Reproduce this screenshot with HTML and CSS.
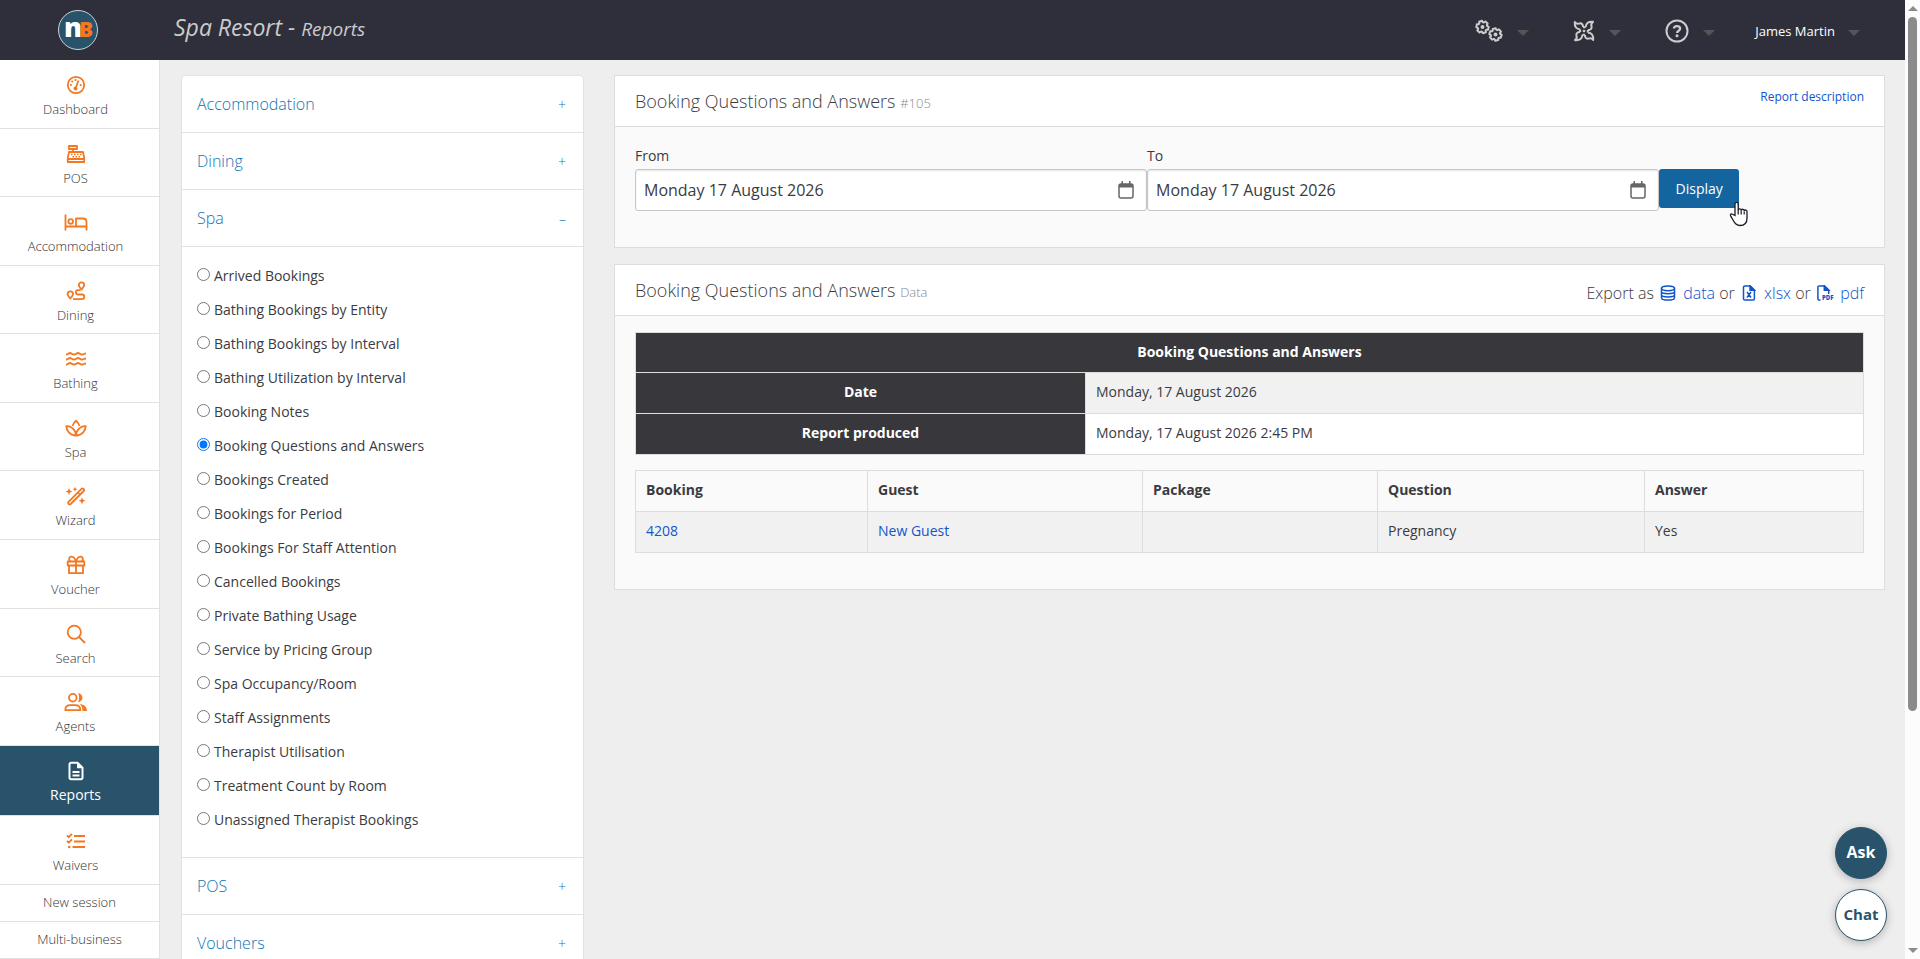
FILE: index.html
```html
<!DOCTYPE html>
<html lang="en">
<head>
    <meta charset="UTF-8">
    <meta name="viewport" content="width=device-width, initial-scale=1.0">
    <title>Spa Resort - Reports</title>
    <link rel="stylesheet" href="styles.css">
</head>
<body>
    <div class="app">
        <header class="topbar">
            <a href="#" class="logo" aria-label="Home">
                <svg width="42" height="42" viewBox="0 0 42 42">
                    <circle cx="21" cy="21" r="19.5" fill="#28536b" stroke="#c9d3da" stroke-width="1"/>
                    <text x="7" y="28" class="logo-n">n</text>
                    <text x="22" y="28" class="logo-b">B</text>
                </svg>
            </a>
            <h1 class="page-title">Spa Resort - <small>Reports</small></h1>
            <nav class="top-menu">
                <button type="button" class="top-item" aria-label="Settings">
                    <svg width="28" height="24" viewBox="0 0 28 24" fill="none" stroke="#ccc" stroke-width="2" stroke-linejoin="round">
                        <defs>
                            <path id="gear" d="M4.26-1.99 6.02-1.5V1.5L4.26 1.99 3.85 2.69 4.31 4.46 1.71 5.96.41 4.69H-.41L-1.71 5.96-4.31 4.46-3.85 2.69-4.26 1.99-6.02 1.5V-1.5L-4.26-1.99-3.85-2.69-4.31-4.46-1.71-5.96-.41-4.69H.41L1.71-5.96 4.31-4.46 3.85-2.69z"/>
                        </defs>
                        <use href="#gear" transform="translate(7.5 8) rotate(12)"/>
                        <circle cx="7.5" cy="8" r="1" />
                        <use href="#gear" transform="translate(20.5 15.5) rotate(18)"/>
                        <circle cx="20.5" cy="15.5" r="1" />
                    </svg>
                    <span class="caret"></span>
                </button>
                <button type="button" class="top-item" aria-label="Integrations">
                    <svg width="22" height="22" viewBox="-11 -11 22 22" fill="none" stroke="#ccc" stroke-width="2" stroke-linejoin="round">
                        <defs>
                            <path id="blade" d="M-3.8-1.6C-7.5-1.8-9.600-4-9.200-9-8-7.200-6-7-4.200-7.600-2-8-.8-6-1-3.800"/>
                        </defs>
                        <use href="#blade"/>
                        <use href="#blade" transform="rotate(90)"/>
                        <use href="#blade" transform="rotate(180)"/>
                        <use href="#blade" transform="rotate(270)"/>
                        <path d="M-1-3.8 1.6-3.8M3.8-1V1.6M1 3.8-1.6 3.8M-3.8 1V-1.6"/>
                        <circle cx="0" cy="0" r="1.3" fill="#ccc" stroke="none"/>
                    </svg>
                    <span class="caret"></span>
                </button>
                <button type="button" class="top-item" aria-label="Help">
                    <svg width="24" height="24" viewBox="0 0 24 24" fill="none" stroke="#ccc" stroke-width="2">
                        <circle cx="12" cy="12" r="10.5"/>
                        <path d="M9 9.6C9 8 10.2 7.2 12 7.2s3.1 1 3.1 2.5c0 2-3 2.1-3 4.2" stroke-width="2.3"/>
                        <circle cx="12" cy="16.7" r="1.5" fill="#ccc" stroke="none"/>
                    </svg>
                    <span class="caret"></span>
                </button>
                <button type="button" class="top-item user">
                    James Martin
                    <span class="caret"></span>
                </button>
            </nav>
        </header>

        <div class="body">
            <nav class="sidebar">
                <a href="#" class="nav-item">
                    <svg width="20" height="20" viewBox="0 0 20 20">
                        <circle cx="10" cy="10" r="8.2"/>
                        <circle cx="9.5" cy="13.5" r="2" class="solid"/>
                        <path d="M9.5 13.5 12.5 5.5"/>
                        <g class="solid">
                            <circle cx="5" cy="10" r="1.1"/>
                            <circle cx="6.3" cy="6.5" r="1.1"/>
                            <circle cx="9.5" cy="5" r="1.1"/>
                            <circle cx="14.7" cy="10" r="1.1"/>
                        </g>
                    </svg>
                    <span>Dashboard</span>
                </a>
                <a href="#" class="nav-item">
                    <svg width="20" height="20" viewBox="0 0 20 20">
                        <path d="M3 2h8v3H3zM7 5v3M3 8h14l1.2 6v4H1.8v-4zM2 15h16"/>
                        <path d="M5 10.5h1.5M8 10.5h1.5M11 10.5h1.5M14 10.5h1.5M6.5 12.8h1.5M9.5 12.8h1.5M12.5 12.8h1.5" stroke-width="1.5"/>
                    </svg>
                    <span>POS</span>
                </a>
                <a href="#" class="nav-item">
                    <svg width="24" height="20" viewBox="0 0 24 20">
                        <path d="M1.5 2.5v16M1.5 14.5h21M22.5 18.5V10c0-2-1.5-3.5-3.5-3.5h-7v8"/>
                        <circle cx="6.7" cy="9.5" r="2.3"/>
                    </svg>
                    <span>Accommodation</span>
                </a>
                <a href="#" class="nav-item">
                    <svg width="20" height="20" viewBox="0 0 20 20">
                        <path d="M15.5 8.5C13.8 6.5 12.8 5.2 12.8 4a2.7 2.7 0 0 1 5.4 0c0 1.2-1 2.5-2.7 4.5zM4.3 17.5C2.6 15.5 1.6 14.2 1.6 13a2.7 2.7 0 0 1 5.4 0c0 1.2-1 2.5-2.7 4.5z"/>
                        <path d="M14.5 9.2H12a2.1 2.1 0 0 0 0 4.3h4a2.3 2.3 0 0 1 0 4.6H7"/>
                    </svg>
                    <span>Dining</span>
                </a>
                <a href="#" class="nav-item">
                    <svg width="22" height="20" viewBox="0 0 22 20">
                        <path d="M1 5.5C3 5.5 3.5 4 5 4s2 1.5 4 1.5S11.5 4 13 4s2 1.5 4 1.5S19 4.5 21 4.5M1 10.5C3 10.5 3.5 9 5 9s2 1.5 4 1.5S11.5 9 13 9s2 1.5 4 1.5S19 9.5 21 9.5M1 15.5C3 15.5 3.5 14 5 14s2 1.5 4 1.5S11.5 14 13 14s2 1.5 4 1.5S19 14.5 21 14.5"/>
                    </svg>
                    <span>Bathing</span>
                </a>
                <a href="#" class="nav-item">
                    <svg width="22" height="20" viewBox="0 0 22 20">
                        <path d="M11 17.5C5 17.5 1.5 13 1.3 8.2 6 8 10.5 11 11 17.5zM11 17.5C17 17.5 20.5 13 20.7 8.2 16 8 11.5 11 11 17.5z"/>
                        <path d="M7.5 8C8.2 5.8 9.5 4 11 2.8 12.5 4 13.8 5.8 14.5 8"/>
                    </svg>
                    <span>Spa</span>
                </a>
                <a href="#" class="nav-item">
                    <svg width="22" height="20" viewBox="0 0 22 20">
                        <path d="M3.5 15.8 16.5 2.8a1.4 1.4 0 0 1 2 0l.2.2a1.4 1.4 0 0 1 0 2L5.7 18a1.4 1.4 0 0 1-2 0l-.2-.2a1.4 1.4 0 0 1 0-2zM13 6.5l2.2 2.2"/>
                        <path class="solid" d="M4 2l1 2.5L7.5 5.5 5 6.5 4 9.2 3 6.5.5 5.5 3 4.5zM10 .8l.7 1.7 1.8.7-1.8.7L10 5.6l-.7-1.7-1.8-.7 1.8-.7zM17 11.3l1 2.5 2.5 1-2.5 1-1 2.7-1-2.7-2.5-1 2.5-1z"/>
                    </svg>
                    <span>Wizard</span>
                </a>
                <a href="#" class="nav-item">
                    <svg width="20" height="20" viewBox="0 0 20 20">
                        <path d="M1.7 6.5h16.6v4H1.7zM3 10.5v7.7h14v-7.7M10 6.5v11.7M10 6.5C9 3.5 8 1.8 6.3 1.8a2.3 2.3 0 0 0-1.5 4.5M10 6.5c1-3 2-4.7 3.7-4.7a2.3 2.3 0 0 1 1.5 4.5"/>
                    </svg>
                    <span>Voucher</span>
                </a>
                <a href="#" class="nav-item">
                    <svg width="20" height="20" viewBox="0 0 20 20">
                        <circle cx="8.3" cy="8.3" r="6.6"/>
                        <path d="M13 13l6 6"/>
                    </svg>
                    <span>Search</span>
                </a>
                <a href="#" class="nav-item">
                    <svg width="24" height="20" viewBox="0 0 24 20">
                        <circle cx="8.8" cy="5.7" r="3.8"/>
                        <path d="M1.3 18.2c0-3 2-5 5-5h5c3 0 5 2 5 5z"/>
                        <path class="solid" d="M14 1.3a4.4 4.4 0 1 1 0 8.8c1.5-2.5 1.5-6.3 0-8.8zM16 12.2c4 0 7 2.5 7 6.8h-4.6c.2-2.8-.6-5-2.4-6.8z"/>
                    </svg>
                    <span>Agents</span>
                </a>
                <a href="#" class="nav-item active">
                    <svg width="20" height="20" viewBox="0 0 20 20">
                        <path d="M5 1.8h6.5L16.5 6.8V16.5a1.7 1.7 0 0 1-1.7 1.7H5.2a1.7 1.7 0 0 1-1.7-1.7V3.5A1.7 1.7 0 0 1 5.2 1.8zM6.5 11h7M6.5 14.5h7"/>
                        <path class="solid" d="M11 1.8v5.5h5.5z"/>
                    </svg>
                    <span>Reports</span>
                </a>
                <a href="#" class="nav-item">
                    <svg width="20" height="20" viewBox="0 0 20 20">
                        <path d="M8 5h11M8 10.5h11M6.5 16h12.5M1 4.5l1.7 1.7L6 2.8M1 10l1.7 1.7L6 8.3"/>
                        <circle cx="3.2" cy="16" r="1.3" class="solid"/>
                    </svg>
                    <span>Waivers</span>
                </a>
                <a href="#" class="nav-link">New session</a>
                <a href="#" class="nav-link">Multi-business</a>
            </nav>

            <main class="content">
                <section class="accordion">
                    <button type="button" class="accordion-head">Accommodation <span>+</span></button>
                    <button type="button" class="accordion-head">Dining <span>+</span></button>
                    <button type="button" class="accordion-head" aria-expanded="true">Spa <span>–</span></button>
                    <div class="report-list">
                        <label><input type="radio" name="report"> Arrived Bookings</label>
                        <label><input type="radio" name="report"> Bathing Bookings by Entity</label>
                        <label><input type="radio" name="report"> Bathing Bookings by Interval</label>
                        <label><input type="radio" name="report"> Bathing Utilization by Interval</label>
                        <label><input type="radio" name="report"> Booking Notes</label>
                        <label><input type="radio" name="report" checked> Booking Questions and Answers</label>
                        <label><input type="radio" name="report"> Bookings Created</label>
                        <label><input type="radio" name="report"> Bookings for Period</label>
                        <label><input type="radio" name="report"> Bookings For Staff Attention</label>
                        <label><input type="radio" name="report"> Cancelled Bookings</label>
                        <label><input type="radio" name="report"> Private Bathing Usage</label>
                        <label><input type="radio" name="report"> Service by Pricing Group</label>
                        <label><input type="radio" name="report"> Spa Occupancy/Room</label>
                        <label><input type="radio" name="report"> Staff Assignments</label>
                        <label><input type="radio" name="report"> Therapist Utilisation</label>
                        <label><input type="radio" name="report"> Treatment Count by Room</label>
                        <label><input type="radio" name="report"> Unassigned Therapist Bookings</label>
                    </div>
                    <button type="button" class="accordion-head">POS <span>+</span></button>
                    <button type="button" class="accordion-head">Vouchers <span>+</span></button>
                </section>

                <div class="panels">
                    <section class="panel">
                        <div class="panel-head">
                            <h2>Booking Questions and Answers <small>#105</small></h2>
                            <a href="#" class="description-link">Report description</a>
                        </div>
                        <form class="filters">
                            <div class="field">
                                <label for="from">From</label>
                                <input type="text" id="from" value="Monday 17 August 2026">
                                <svg class="calendar" width="16" height="18" viewBox="0 0 16 18">
                                    <rect x="1" y="3" width="14" height="14" rx="2" fill="none" stroke="#666" stroke-width="1.5"/>
                                    <path d="M1 3h14v3.5H1zM3.5 0h1.5v3H3.5zM11 0h1.5v3H11z" fill="#666"/>
                                </svg>
                            </div>
                            <div class="field">
                                <label for="to">To</label>
                                <input type="text" id="to" value="Monday 17 August 2026">
                                <svg class="calendar" width="16" height="18" viewBox="0 0 16 18">
                                    <rect x="1" y="3" width="14" height="14" rx="2" fill="none" stroke="#666" stroke-width="1.5"/>
                                    <path d="M1 3h14v3.5H1zM3.5 0h1.5v3H3.5zM11 0h1.5v3H11z" fill="#666"/>
                                </svg>
                            </div>
                            <div class="submit">
                                <button type="button" class="btn-display">Display</button>
                                <svg class="pointer" width="20" height="26" viewBox="0 0 20 26">
                                    <path d="M6 14.5V3a1.6 1.6 0 0 1 3.2 0v6.2a1.5 1.5 0 0 1 3 .3 1.5 1.5 0 0 1 3 .6 1.4 1.4 0 0 1 2.8.7V17c0 4.5-2.5 7.5-7 7.5-4 0-5.5-2.5-7-5.5l-2.5-4.3c-.5-1.5 1-2.2 2-1.4z" fill="#fff" stroke="#1b1b2b" stroke-width="1.3"/>
                                    <path d="M9.2 9v4.5M12.2 9.5v4M15.2 10.5v3" stroke="#1b1b2b" stroke-width="1.2"/>
                                </svg>
                            </div>
                        </form>
                    </section>

                    <section class="panel">
                        <div class="panel-head">
                            <h2>Booking Questions and Answers <small>Data</small></h2>
                            <div class="export">
                                Export as
                                <a href="#"><svg width="16" height="16" viewBox="0 0 16 16">
                                    <ellipse cx="8" cy="3.3" rx="6.5" ry="2.4"/>
                                    <path d="M1.5 3.3v9.4c0 1.3 2.9 2.4 6.5 2.4s6.5-1.1 6.5-2.4V3.3M1.5 6.5c0 1.3 2.9 2.2 6.5 2.2s6.5-.9 6.5-2.2M1.5 9.7c0 1.3 2.9 2.2 6.5 2.2s6.5-.9 6.5-2.2"/>
                                </svg> data</a> or
                                <a href="#"><svg width="16" height="16" viewBox="0 0 16 16">
                                    <path d="M3.8.9h5.4l4.2 4.2v8.7a1.3 1.3 0 0 1-1.3 1.3H3.8a1.3 1.3 0 0 1-1.3-1.3V2.2A1.3 1.3 0 0 1 3.8.9zM6 7l4 5.5M10 7l-4 5.5"/>
                                    <path d="M9 .9v4.3h4.4z" fill="#1155cc"/>
                                </svg> xlsx</a> or
                                <a href="#"><svg width="18" height="18" viewBox="0 0 18 18" class="pdf-icon">
                                    <path d="M3.5 15.1H2.2A1.3 1.3 0 0 1 .9 13.8V2.2A1.3 1.3 0 0 1 2.2.9H7.5l4.2 4.2V9"/>
                                    <path d="M7.3.9v4.3h4.4z" fill="#1155cc"/>
                                    <text x="5" y="15" class="pdf-mark">PDF</text>
                                </svg> pdf</a>
                            </div>
                        </div>
                        <div class="report">
                            <table class="info-table">
                                <thead>
                                    <tr><th colspan="2">Booking Questions and Answers</th></tr>
                                </thead>
                                <tbody>
                                    <tr><th>Date</th><td>Monday, 17 August 2026</td></tr>
                                    <tr><th>Report produced</th><td>Monday, 17 August 2026 2:45 PM</td></tr>
                                </tbody>
                            </table>
                            <table class="data-table">
                                <thead>
                                    <tr>
                                        <th class="col-booking">Booking</th>
                                        <th class="col-guest">Guest</th>
                                        <th class="col-package">Package</th>
                                        <th class="col-question">Question</th>
                                        <th>Answer</th>
                                    </tr>
                                </thead>
                                <tbody>
                                    <tr>
                                        <td><a href="#">4208</a></td>
                                        <td><a href="#">New Guest</a></td>
                                        <td></td>
                                        <td>Pregnancy</td>
                                        <td>Yes</td>
                                    </tr>
                                </tbody>
                            </table>
                        </div>
                    </section>
                </div>
            </main>
        </div>

        <div class="help-buttons">
            <button type="button" class="round ask">Ask</button>
            <button type="button" class="round chat">Chat</button>
        </div>
    </div>

    <div class="scrollbar">
        <span class="arrow up"></span>
        <div class="track"><div class="thumb"></div></div>
        <span class="arrow down"></span>
    </div>
</body>
</html>
```
FILE: styles.css
```css
* {
    box-sizing: border-box;
}

body {
    display: flex;
    height: 100vh;
    margin: 0;
    overflow: hidden;
    font-family: "Open Sans", sans-serif;
    font-size: 14px;
    line-height: 20px;
    color: #3b3b3f;
    background-color: #eee;
}

a {
    color: #1155cc;
    text-decoration: none;
}

button,
input {
    font-family: inherit;
    color: inherit;
}

button {
    cursor: pointer;
}

h1,
h2 {
    margin: 0;
    font-weight: 300;
}

.app {
    position: relative;
    display: flex;
    flex-direction: column;
    flex: 1;
    min-width: 0;
}

/* Top bar */
.topbar {
    display: flex;
    align-items: center;
    flex: none;
    height: 60px;
    padding-right: 45px;
    background-color: #2e2f3b;
}

.logo {
    display: flex;
    width: 174px;
    padding-left: 57px;
}

.logo-n {
    font-size: 27px;
    font-weight: 800;
    fill: #fff;
}

.logo-b {
    font-size: 21px;
    font-weight: 800;
    fill: #f47721;
}

.page-title {
    flex: 1;
    padding-bottom: 4px;
    font-size: 23px;
    font-style: italic;
    font-weight: 400;
    line-height: 28px;
    color: #ccc;
}

.page-title small {
    font-size: 19px;
}

.top-menu {
    display: flex;
    align-items: center;
    gap: 44px;
    padding-top: 2px;
}

.top-item {
    display: flex;
    align-items: center;
    gap: 14px;
    padding: 0;
    border: none;
    background: none;
    font-size: 13px;
    font-weight: 500;
    color: #fff;
}

.top-item.user {
    gap: 13px;
    margin-left: -4px;
}

.caret {
    margin-top: 4px;
    border: 6px solid transparent;
    border-top-color: #555;
    border-bottom: none;
}

/* Left navigation */
.body {
    display: flex;
    flex: 1;
    min-height: 0;
}

.sidebar {
    display: flex;
    flex-direction: column;
    flex: none;
    width: 160px;
    border-right: 1px solid #e3dfe5;
    background-color: #fff;
}

.nav-item {
    display: flex;
    flex-direction: column;
    align-items: center;
    flex: 1 1 68px;
    gap: 4px;
    padding: 15px 8px 0 0;
    border-bottom: 1px solid #e3dfe5;
    font-size: 13px;
    font-weight: 300;
    color: #333;
}

.nav-item svg {
    fill: none;
    stroke: #f47721;
    stroke-width: 1.8;
    stroke-linejoin: round;
}

.nav-item .solid {
    fill: #f47721;
    stroke: none;
}

.nav-item.active {
    flex-basis: 70px;
    font-size: 14px;
    font-weight: 400;
    color: #fff;
    background-color: #28536b;
}

.nav-item.active svg {
    stroke: #fff;
    stroke-width: 2;
}

.nav-item.active .solid {
    fill: #fff;
}

.nav-link {
    padding: 7px 0 9px;
    border-bottom: 1px solid #e3dfe5;
    font-size: 13px;
    font-weight: 300;
    text-align: center;
    color: #333;
}

/* Report picker */
.content {
    display: flex;
    align-items: flex-start;
    flex: 1;
    gap: 30px;
    min-width: 0;
    padding: 15px 20px 0 21px;
    overflow: hidden;
}

.accordion {
    flex: none;
    width: 403px;
    border: 1px solid #e2e2e2;
    border-radius: 4px;
    background-color: #fff;
}

.accordion-head {
    display: flex;
    justify-content: space-between;
    align-items: center;
    width: 100%;
    height: 57px;
    padding: 0 17px 0 15px;
    border: none;
    border-bottom: 1px solid #e2e2e2;
    background: none;
    font-size: 16px;
    font-weight: 300;
    color: #1074b4;
}

.accordion-head span {
    font-size: 14px;
}

.report-list {
    display: flex;
    flex-direction: column;
    padding: 12px 15px 20px;
    border-bottom: 1px solid #e2e2e2;
}

.report-list label {
    display: flex;
    align-items: center;
    gap: 4px;
    height: 34px;
}

.report-list input {
    width: 13px;
    height: 13px;
    margin: 0 0 4px;
}

/* Panels */
.panels {
    display: flex;
    flex-direction: column;
    flex: 1;
    gap: 16px;
    min-width: 0;
}

.panel {
    border: 1px solid #ddd;
    background-color: #fafafa;
}

.panel-head {
    display: flex;
    justify-content: space-between;
    height: 51px;
    padding: 0 20px;
    border-bottom: 1px solid #ddd;
    background-color: #fff;
}

.panel-head h2 {
    padding-top: 13px;
    font-size: 18px;
    line-height: 24px;
}

.panel-head small {
    font-size: 13px;
    color: #888;
}

.description-link {
    padding-top: 11px;
    font-size: 12px;
}

.filters {
    display: grid;
    grid-template-columns: 5fr 5fr 2fr;
    padding: 18px 20px 36px;
}

.field {
    position: relative;
}

.field label {
    display: block;
    height: 24px;
    line-height: 22px;
}

.field input {
    display: block;
    width: 100%;
    height: 42px;
    padding: 0 8px;
    border: 1px solid #c6c6c6;
    border-radius: 3px;
    background-color: #fff;
    box-shadow: inset 0 1px 2px rgba(0, 0, 0, 0.1);
    font-size: 16px;
}

.calendar {
    position: absolute;
    right: 13px;
    bottom: 12px;
}

.submit {
    position: relative;
    justify-self: start;
    padding-top: 24px;
}

.btn-display {
    width: 80px;
    height: 39px;
    padding: 0;
    border: none;
    border-radius: 3px;
    background-color: #14659f;
    font-size: 14px;
    color: #fff;
}

.pointer {
    position: absolute;
    left: 70px;
    top: 56px;
}

.export {
    padding-top: 18px;
    font-size: 16px;
    font-weight: 300;
}

.export a {
    margin-left: 2px;
}

.export svg {
    margin-right: 3px;
    vertical-align: -2px;
    fill: none;
    stroke: #1155cc;
    stroke-width: 1.5;
}

.export .pdf-icon {
    margin-right: 1px;
    vertical-align: -4px;
}

.export .pdf-mark {
    font-size: 6px;
    font-weight: 800;
    fill: #1155cc;
    stroke: none;
}

/* Report tables */
.report {
    padding: 16px 20px 36px;
}

table {
    width: 100%;
    border-collapse: collapse;
}

th,
td {
    padding: 7px 10px 9px;
    border: 1px solid #ddd;
    line-height: 24px;
    text-align: left;
}

.info-table {
    margin-bottom: 15px;
    background-color: #fff;
}

.info-table thead th {
    line-height: 23px;
}

.info-table th {
    text-align: center;
    color: #fff;
    background-color: #38373c;
}

.info-table tbody th {
    width: 450px;
}

.info-table tbody tr:first-child td,
.data-table td {
    background-color: #f1f1f1;
}

.data-table {
    table-layout: fixed;
}

.col-booking {
    width: 232px;
}

.col-guest {
    width: 275px;
}

.col-package {
    width: 235px;
}

.col-question {
    width: 267px;
}

/* Floating buttons */
.help-buttons {
    position: absolute;
    right: 18px;
    bottom: 18px;
    display: flex;
    flex-direction: column;
    gap: 10px;
}

.round {
    width: 52px;
    height: 52px;
    padding: 0 0 2px;
    border: 1px solid #28536b;
    border-radius: 50%;
    box-shadow: 0 2px 8px rgba(0, 0, 0, 0.25);
    font-size: 15px;
    font-weight: 700;
}

.ask {
    font-size: 16px;
    color: #fff;
    background-color: #28536b;
}

.chat {
    color: #28536b;
    background-color: #fff;
}

/* Scrollbar strip */
.scrollbar {
    display: flex;
    flex-direction: column;
    align-items: center;
    flex: none;
    gap: 6px;
    width: 15px;
    padding: 6px 0;
    background-color: #fcfcfc;
}

.arrow {
    border: 5px solid transparent;
}

.arrow.up {
    border-top: none;
    border-bottom-color: #8b8b8b;
}

.arrow.down {
    border-bottom: none;
    border-top-color: #8b8b8b;
}

.track {
    flex: 1;
}

.thumb {
    width: 9px;
    height: 75%;
    border-radius: 5px;
    background-color: #8b8b8b;
}
```
